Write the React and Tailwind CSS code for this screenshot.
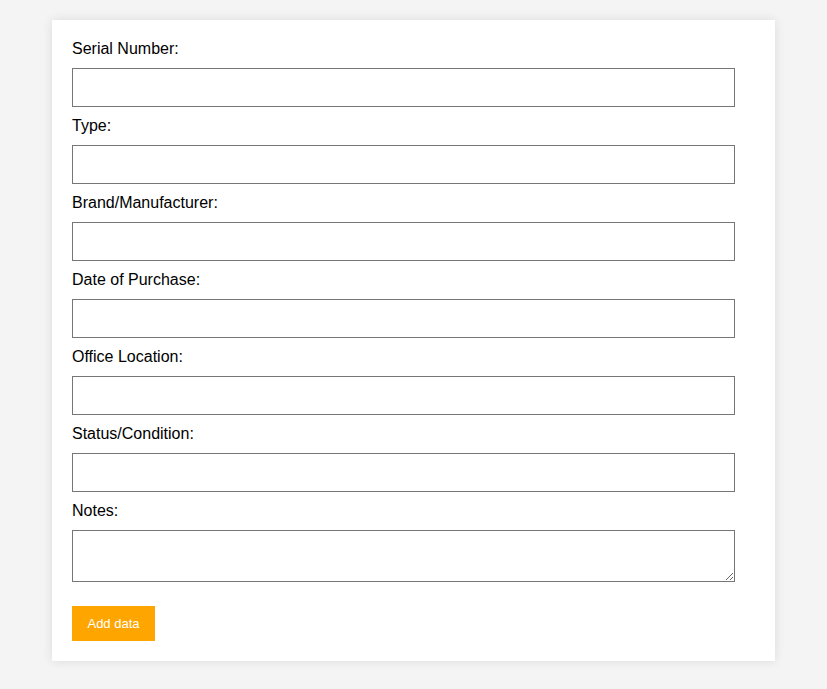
import React from 'react';

const fields = [
  'Serial Number:',
  'Type:',
  'Brand/Manufacturer:',
  'Date of Purchase:',
  'Office Location:',
  'Status/Condition:',
];

const App = () => {
  return (
    <div className="min-h-screen bg-[#f4f4f4] pt-[20px] font-['Liberation_Sans',Arial,sans-serif] text-black">
      <form
        className="mx-auto w-[723px] bg-white p-[20px] shadow-[0_0_10px_rgba(0,0,0,0.1)]"
        onSubmit={(e) => e.preventDefault()}>
        {fields.map((label) => (
          <div key={label}>
            <label className="mb-[10px] block text-[16px] leading-[18px]">
              {label}
            </label>
            <input
              type="text"
              className="mb-[10px] block h-[39px] w-[663px] border border-[#767676] bg-white px-[10px] text-[16px] outline-none"
            />
          </div>
        ))}
        <label className="mb-[10px] block text-[16px] leading-[18px]">
          Notes:
        </label>
        <textarea className="mb-[10px] block h-[52px] w-[663px] border border-[#767676] bg-white px-[10px] py-[10px] text-[16px] outline-none" />
        <button
          type="submit"
          className="mt-[24px] block h-[35px] w-[83px] bg-[#ffa500] text-center text-[13px] leading-[15px] text-white">
          Add data
        </button>
      </form>
    </div>
  );
};

export default App;
